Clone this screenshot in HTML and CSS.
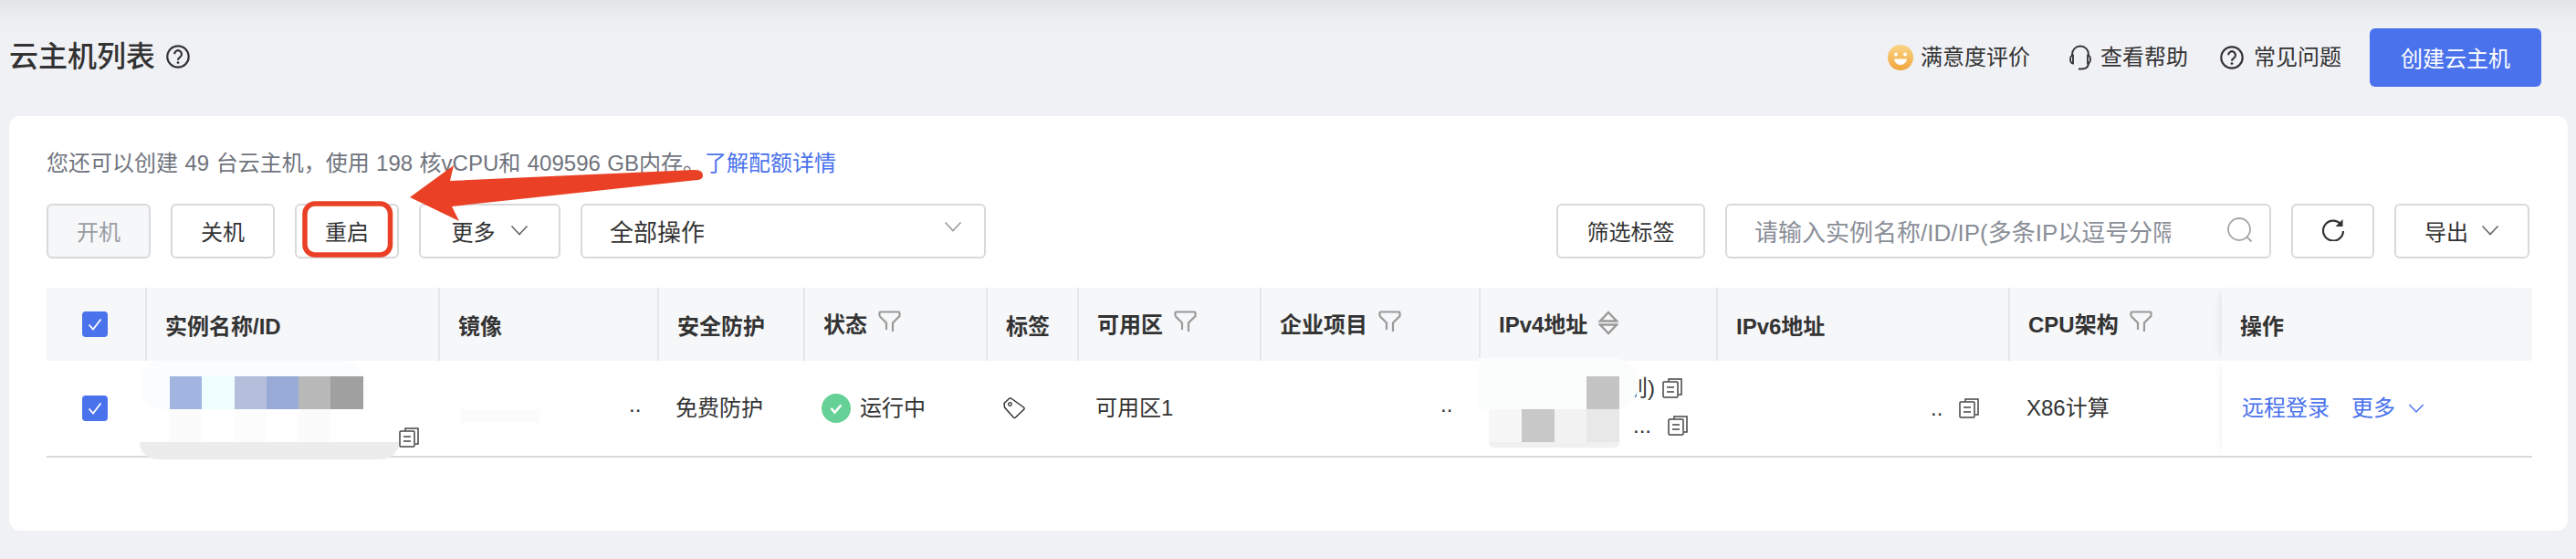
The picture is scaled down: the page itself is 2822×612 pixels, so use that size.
FILE: index.html
```html
<!DOCTYPE html>
<html lang="zh">
  <head>
    <meta charset="utf-8">
    <title>云主机列表</title>
    <link rel="stylesheet" href="styles.css">
  </head>
  <body>
    <svg class="icon-defs" width="0" height="0">
      <defs>
        <symbol id="i-help" viewBox="0 0 26 26">
          <circle cx="13" cy="13" r="11.7" fill="none" stroke="currentColor" stroke-width="2.2"/>
          <path d="M9.200 10.200a3.900 3.900 0 1 1 6.200 3.100c-1.500 1.100-2.400 1.800-2.400 3.500" fill="none" stroke="currentColor" stroke-width="2.200"/>
          <circle cx="13" cy="19.600" r="1.400" fill="currentColor"/>
        </symbol>
        <symbol id="i-chevron" viewBox="0 0 20 12">
          <path d="M1.500 1.500 10 10.500l8.500-9" fill="none" stroke="currentColor" stroke-width="1.600"/>
        </symbol>
        <symbol id="i-filter" viewBox="0 0 25 24">
          <path d="M1.500 6V2.500a1 1 0 0 1 1-1h20a1 1 0 0 1 1 1V6L16 13.500V23M1.500 6 9 13.500V21" fill="none" stroke="currentColor" stroke-width="2.200"/>
        </symbol>
        <symbol id="i-copy" viewBox="0 0 22 22">
          <path d="M7 3.500V1h14v17h-3" fill="none" stroke="currentColor" stroke-width="1.500"/>
          <rect x="1" y="4" width="16" height="17" rx="1" fill="#fff" stroke="currentColor" stroke-width="1.500"/>
          <path d="M5 10h8M5 15h8" stroke="currentColor" stroke-width="1.500"/>
        </symbol>
        <symbol id="i-check" viewBox="0 0 28 28">
          <rect width="28" height="28" rx="4" fill="#4a72ec"/>
          <path d="m7.500 14.500 4.500 5 8.500-11" fill="none" stroke="#fff" stroke-width="1.800"/>
        </symbol>
      </defs>
    </svg>

    <div class="page">
      <div class="page-head">
        <div class="title-wrap">
          <h1 class="title">云主机列表</h1>
          <svg class="title-help"><use href="#i-help"/></svg>
        </div>
        <div class="head-actions">
          <a class="head-link">
            <svg class="smile" viewBox="0 0 28 28">
              <defs>
                <linearGradient id="smile-fill" x1="0" y1="0" x2="0" y2="1">
                  <stop offset="0" stop-color="#fad585"/>
                  <stop offset="1" stop-color="#f2a53e"/>
                </linearGradient>
              </defs>
              <circle cx="14" cy="14" r="14" fill="url(#smile-fill)"/>
              <circle cx="9" cy="10.500" r="2" fill="#fff"/>
              <circle cx="19" cy="10.500" r="2" fill="#fff"/>
              <path d="M7 15.500h14c-.6 4-3.500 6.500-7 6.500s-6.400-2.500-7-6.500z" fill="#fff"/>
            </svg>
            满意度评价
          </a>
          <a class="head-link">
            <svg class="headset" viewBox="0 0 28 28">
              <path d="M5 12V10.500a9 9 0 0 1 18 0V12" fill="none" stroke="currentColor" stroke-width="1.800"/>
              <path d="M6 11.500a3 4.500 0 0 0 0 9z" fill="none" stroke="currentColor" stroke-width="1.800"/>
              <path d="M22 11.500a3 4.500 0 0 1 0 9z" fill="none" stroke="currentColor" stroke-width="1.800"/>
              <path d="M23 20c0 4-3 6.500-8 6.500h-3" fill="none" stroke="currentColor" stroke-width="1.800"/>
            </svg>
            查看帮助
          </a>
          <a class="head-link">
            <svg class="link-help"><use href="#i-help"/></svg>
            常见问题
          </a>
          <button class="btn-primary">创建云主机</button>
        </div>
      </div>

      <div class="card">
        <p class="quota">您还可以创建 49 台云主机，使用 198 核vCPU和 409596 GB内存。<a class="link">了解配额详情</a></p>

        <div class="toolbar">
          <div class="toolbar-left">
            <button class="btn btn-disabled">开机</button>
            <button class="btn">关机</button>
            <button class="btn">重启</button>
            <button class="btn btn-more">更多 <svg class="chev"><use href="#i-chevron"/></svg></button>
            <div class="select">全部操作 <svg class="chev chev-up"><use href="#i-chevron"/></svg></div>
          </div>
          <div class="toolbar-right">
            <button class="btn btn-tag">筛选标签</button>
            <div class="search">
              <span class="search-text">请输入实例名称/ID/IP(多条IP以逗号分隔)</span>
              <svg class="search-icon" viewBox="0 0 28 28">
                <circle cx="13" cy="13" r="12" fill="none" stroke="currentColor" stroke-width="1.800"/>
                <path d="m21.500 21.500 5 5" stroke="currentColor" stroke-width="1.800"/>
              </svg>
            </div>
            <button class="btn btn-refresh">
              <svg viewBox="0 0 24 24" class="refresh">
                <path d="M20 5A11 11 0 1 0 23 13" fill="none" stroke="currentColor" stroke-width="2.200"/>
                <path d="M22.500 0v8h-8z" fill="currentColor"/>
              </svg>
            </button>
            <button class="btn btn-export">导出 <svg class="chev"><use href="#i-chevron"/></svg></button>
          </div>
        </div>

        <div class="table">
          <div class="thead">
            <div class="th th-check"><svg class="check"><use href="#i-check"/></svg></div>
            <div class="th">实例名称/ID</div>
            <div class="th">镜像</div>
            <div class="th">安全防护</div>
            <div class="th th-tool">状态<svg class="filter"><use href="#i-filter"/></svg></div>
            <div class="th">标签</div>
            <div class="th th-tool">可用区<svg class="filter"><use href="#i-filter"/></svg></div>
            <div class="th th-tool">企业项目<svg class="filter"><use href="#i-filter"/></svg></div>
            <div class="th th-tool">IPv4地址
              <svg class="sort" viewBox="0 0 22 27">
                <path d="M11 2 20 11.500H2zM11 25 2 15.500h18z" fill="none" stroke="currentColor" stroke-width="2.400"/>
              </svg>
            </div>
            <div class="th">IPv6地址</div>
            <div class="th th-tool">CPU架构<svg class="filter"><use href="#i-filter"/></svg></div>
            <div class="th th-op">操作</div>
          </div>
          <div class="tbody">
            <div class="td td-check"><svg class="check"><use href="#i-check"/></svg></div>
            <div class="td td-name">
              <svg class="copy copy-name"><use href="#i-copy"/></svg>
              <div class="patch patch-name"></div>
              <div class="blur blur-name">
                <i style="background:#a2b5e0"></i><i style="background:#efffff"></i><i style="background:#b5bfdc"></i><i style="background:#98abd6"></i><i style="background:#b8b8b8"></i><i style="background:#a0a0a0"></i>
                <i style="background:#fbfbfb"></i><i style="background:#fff"></i><i style="background:#fcfcfc"></i><i style="background:#fff"></i><i style="background:#fbfbfb"></i><i style="background:#fff"></i>
              </div>
              <div class="blur-band"></div>
            </div>
            <div class="td td-image"><span class="dots dots-image">..</span><div class="patch patch-image"></div></div>
            <div class="td">免费防护</div>
            <div class="td td-status">
              <svg class="ok" viewBox="0 0 32 32">
                <circle cx="16" cy="16" r="16" fill="#66d196"/>
                <path d="m10.500 16 4 4.500 7-8" fill="none" stroke="#fff" stroke-width="2.600"/>
              </svg>
              运行中
            </div>
            <div class="td">
              <svg class="tag" viewBox="0 0 24 24">
                <path d="M1 6.500 7 1h1.500l14 10a1.500 1.500 0 0 1 .2 2.200L13.500 22a1.500 1.500 0 0 1-2.200 0L1.500 11z" fill="none" stroke="currentColor" stroke-width="1.500" stroke-linejoin="round"/>
                <circle cx="7.500" cy="7.500" r="1.800" fill="none" stroke="currentColor" stroke-width="1.300"/>
              </svg>
            </div>
            <div class="td">可用区1</div>
            <div class="td td-project"><span class="dots dots-project">..</span></div>
            <div class="td td-ipv4">
              <div class="ip-line ip-one">别)<svg class="copy"><use href="#i-copy"/></svg></div>
              <div class="ip-line ip-two">...<svg class="copy"><use href="#i-copy"/></svg></div>
              <div class="patch patch-ip"></div>
              <div class="blur blur-ip">
                <i></i><i></i><i></i><i style="background:#c4c4c4"></i>
                <i style="background:#f7f7f7"></i><i style="background:#c8c8c8"></i><i style="background:#f2f2f2"></i><i style="background:#e8e8e8"></i>
              </div>
            </div>
            <div class="td td-ipv6"><span class="dots">..</span><svg class="copy"><use href="#i-copy"/></svg></div>
            <div class="td">X86计算</div>
            <div class="td td-op"><a class="link">远程登录</a><a class="link link-more">更多<svg class="chev"><use href="#i-chevron"/></svg></a></div>
          </div>
        </div>
      </div>
    </div>

    <svg class="annotation" viewBox="0 0 2822 612">
      <rect x="334" y="223" width="93.500" height="56" rx="11" fill="none" stroke="#ea4025" stroke-width="5.500"/>
      <path d="M449 216 497 181 493 198 760 186Q770 186 770 192 770 196 765 197L495 226 503 242z" fill="#ea4025"/>
    </svg>
  </body>
</html>
```
FILE: styles.css
```css
*{
  margin: 0px;
  box-sizing: border-box;
}

body{
  width: 2822px;
  height: 612px;
  overflow: hidden;
  position: relative;
  background: linear-gradient(#e2e3e7, #eeeff3 24px, #f0f1f5 40px);
  color: #333333;
  font-family: "Liberation Sans", "Noto Sans CJK SC", sans-serif;
  font-size: 24px;
}

.icon-defs{
  position: absolute;
}

.page{
  padding: 31px 9px 0px 10px;
}

.page-head{
  display: flex;
  justify-content: space-between;
  align-items: center;
  height: 64px;
  padding-right: 29px;
  margin-bottom: 32px;
}

.title-wrap{
  display: flex;
  align-items: center;
  gap: 12px;
  padding-bottom: 2px;
}

.title{
  font-size: 32px;
  font-weight: 500;
  line-height: 40px;
}

.title-help{
  width: 26px;
  height: 26px;
}

.head-actions{
  display: flex;
  align-items: center;
}

.head-link{
  display: flex;
  align-items: center;
  gap: 8px;
  margin-right: 41px;
  line-height: 32px;
}

.head-link:nth-child(2){
  margin-right: 35px;
}

.head-link:nth-child(3){
  margin-right: 31px;
  gap: 11px;
}

.smile, .headset{
  width: 28px;
  height: 28px;
}

.link-help{
  width: 26px;
  height: 26px;
}

.btn-primary{
  width: 188px;
  height: 64px;
  border: none;
  border-radius: 6px;
  background-color: #4a72ec;
  color: white;
  font: inherit;
  padding-bottom: 2px;
}

.card{
  height: 454px;
  padding: 36px 39px 0px 41px;
  background-color: white;
  border-radius: 12px;
}

.quota{
  color: #70747d;
  line-height: 32px;
  height: 32px;
  margin-bottom: 28px;
  word-spacing: 0.800px;
}

.link{
  color: #4a72ec;
}

.toolbar{
  display: flex;
  justify-content: space-between;
  height: 60px;
  margin-bottom: 32px;
}

.toolbar-left, .toolbar-right{
  display: flex;
  gap: 22px;
}

.toolbar-right{
  padding-right: 3px;
}

.btn{
  display: flex;
  align-items: center;
  justify-content: center;
  width: 114px;
  height: 60px;
  padding: 0px 0px 2px;
  background-color: white;
  border: 2px solid #d8d9dc;
  border-radius: 6px;
  color: #333333;
  font: inherit;
}

.btn-disabled{
  background-color: #f6f7f9;
  color: #9a9da3;
}

.btn-more{
  width: 155px;
  gap: 16px;
}

.chev{
  width: 20px;
  height: 12px;
  color: #666666;
}

.select{
  display: flex;
  align-items: center;
  justify-content: space-between;
  width: 444px;
  height: 60px;
  padding: 0px 24px 2px 30px;
  border: 2px solid #d8d9dc;
  border-radius: 6px;
  font-size: 26px;
}

.chev-up{
  margin-bottom: 8px;
  color: #999999;
}

.btn-tag{
  width: 163px;
}

.search{
  display: flex;
  align-items: center;
  justify-content: space-between;
  width: 598px;
  height: 60px;
  padding: 0px 18px 2px 30px;
  border: 2px solid #d8d9dc;
  border-radius: 6px;
  color: #8a8e97;
  font-size: 26px;
}

.search-text{
  width: 456px;
  overflow: hidden;
  white-space: nowrap;
}

.search-icon{
  width: 28px;
  height: 28px;
  color: #a6a6a6;
}

.btn-refresh{
  width: 91px;
}

.refresh{
  width: 24px;
  height: 24px;
}

.btn-export{
  width: 148px;
  gap: 14px;
}

.table{
  width: 2723px;
}

.thead, .tbody{
  display: grid;
  grid-template-columns: 108px 321px 240px 160px 200px 100px 200px 240px 260px 320px 234px 340px;
}

.thead{
  height: 80px;
  background-color: #f6f7f9;
  font-weight: 700;
}

.th{
  display: flex;
  align-items: center;
  gap: 12px;
  padding-left: 20px;
  border-left: 2px solid #e4e6ec;
}

.th-tool{
  padding-bottom: 4px;
}

.th-check{
  border-left: none;
  padding-left: 39px;
}

.th-op{
  border-left: none;
  box-shadow: -8px 0px 8px -6px rgba(0, 0, 0, 0.08);
}

.check{
  width: 28px;
  height: 28px;
}

.filter{
  width: 25px;
  height: 24px;
  margin-bottom: 2px;
  color: #9a9a9a;
}

.sort{
  width: 22px;
  height: 27px;
  color: #9a9a9a;
}

.tbody{
  height: 106px;
  border-bottom: 2px solid #d8d9dc;
}

.td{
  position: relative;
  display: flex;
  align-items: center;
  padding-left: 20px;
  height: 104px;
  line-height: 32px;
}

.td-check{
  padding-left: 39px;
}

.td-status{
  gap: 10px;
}

.ok{
  width: 32px;
  height: 32px;
}

.tag{
  width: 24px;
  height: 24px;
  margin-left: -1px;
}

.copy{
  width: 22px;
  height: 22px;
  color: #444444;
}

.copy-name{
  position: absolute;
  left: 278px;
  top: 73px;
}

/* mosaic over the hidden instance name and addresses */
.blur{
  position: absolute;
  display: grid;
  grid-template-rows: 36px 36px;
}

.blur-name{
  left: 27px;
  top: 17px;
  grid-template-columns: repeat(6, 35.300px);
}

.blur-band{
  position: absolute;
  left: -6px;
  top: 89px;
  width: 284px;
  height: 19px;
  background-color: #ececec;
  border-radius: 0px 0px 40px 40px;
}

.patch{
  position: absolute;
  background-color: #fbfbfb;
}

.patch-name{
  left: -4px;
  top: 0px;
  width: 248px;
  height: 53px;
  background-color: #fbfcfe;
  border-radius: 20px 30px 20px 20px;
}

.patch-image{
  left: 24px;
  top: 53px;
  width: 88px;
  height: 15px;
}

.patch-ip{
  left: 0px;
  top: -3px;
  width: 175px;
  height: 56px;
  background-color: #fbfcfc;
  border-radius: 0px 30px 30px 0px;
}

.dots{
  font-size: 24px;
  line-height: 24px;
}

.dots-image{
  position: absolute;
  left: 209px;
  top: 36px;
}

.dots-project{
  position: absolute;
  left: 198px;
  top: 36px;
}

.td-ipv4{
  display: block;
}

.ip-line{
  position: absolute;
  display: flex;
  align-items: center;
  gap: 8px;
}

.ip-one{
  left: 161px;
  top: 14px;
}

.ip-two{
  left: 169px;
  top: 55px;
  gap: 18px;
}

.blur-ip{
  left: 11px;
  top: 17px;
  grid-template-columns: repeat(4, 35.750px);
}

.blur-ip::after{
  content: "";
  position: absolute;
  left: 0px;
  top: 72px;
  width: 143px;
  height: 6px;
  background-color: #f0f0f0;
  border-radius: 0px 0px 10px 10px;
}

.td-ipv6{
  padding-left: 235px;
  gap: 18px;
}

.td-op{
  padding-left: 22px;
  box-shadow: -8px 0px 8px -6px rgba(0, 0, 0, 0.05);
}

.link-more{
  display: flex;
  align-items: center;
  gap: 14px;
  margin-left: 24px;
}

.link-more .chev{
  width: 18px;
  color: #4a72ec;
}

.annotation{
  position: absolute;
  left: 0px;
  top: 0px;
  width: 2822px;
  height: 612px;
  pointer-events: none;
}
```
